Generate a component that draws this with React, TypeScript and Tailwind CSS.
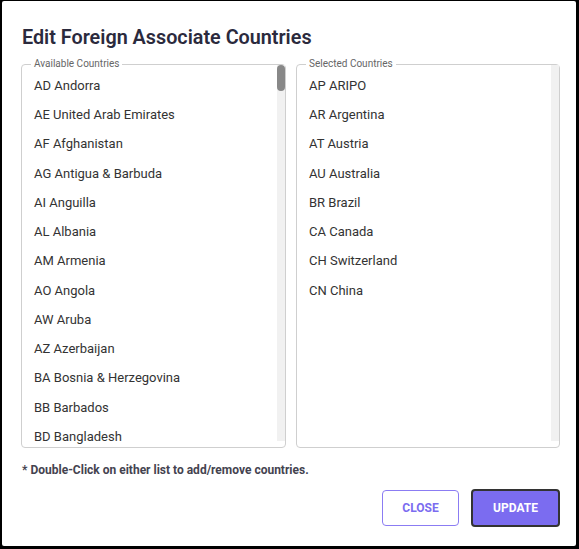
import { useState } from "react";

// ISO code + name pairs for the countries not yet picked
const AVAILABLE = `AD Andorra|AE United Arab Emirates|AF Afghanistan|AG Antigua & Barbuda|AI Anguilla|AL Albania|AM Armenia|AO Angola|AW Aruba|AZ Azerbaijan|BA Bosnia & Herzegovina|BB Barbados|BD Bangladesh|BE Belgium|BF Burkina Faso|BG Bulgaria|BH Bahrain|BI Burundi|BJ Benin|BM Bermuda|BN Brunei|BO Bolivia|BS Bahamas|BT Bhutan|BW Botswana|BY Belarus|BZ Belize|CD Congo (DRC)|CF Central African Republic|CG Congo|CI Côte d'Ivoire|CK Cook Islands|CL Chile|CM Cameroon|CO Colombia|CR Costa Rica|CU Cuba|CV Cape Verde|CY Cyprus|CZ Czech Republic|DE Germany|DJ Djibouti|DK Denmark|DM Dominica|DO Dominican Republic|DZ Algeria|EA Eurasian Patent Office|EC Ecuador|EE Estonia|EG Egypt|EM EUIPO|EP European Patent Office|ER Eritrea|ES Spain|ET Ethiopia|FI Finland|FJ Fiji|FK Falkland Islands|FM Micronesia|FO Faroe Islands|FR France|GA Gabon|GB United Kingdom|GD Grenada|GE Georgia|GH Ghana|GI Gibraltar|GL Greenland|GM Gambia|GN Guinea|GQ Equatorial Guinea|GR Greece|GT Guatemala|GW Guinea-Bissau|GY Guyana|HK Hong Kong|HN Honduras|HR Croatia|HT Haiti|HU Hungary|ID Indonesia|IE Ireland|IL Israel|IN India|IQ Iraq|IR Iran|IS Iceland|IT Italy|JM Jamaica|JO Jordan|JP Japan|KE Kenya|KG Kyrgyzstan|KH Cambodia|KI Kiribati|KM Comoros|KN St. Kitts & Nevis|KP North Korea|KR South Korea|KW Kuwait|KY Cayman Islands|KZ Kazakhstan|LA Laos|LB Lebanon|LC St. Lucia|LI Liechtenstein|LK Sri Lanka|LR Liberia|LS Lesotho|LT Lithuania|LU Luxembourg|LV Latvia|LY Libya|MA Morocco|MC Monaco|MD Moldova|ME Montenegro|MG Madagascar|MH Marshall Islands|MK North Macedonia|ML Mali|MM Myanmar|MN Mongolia|MO Macau|MR Mauritania|MS Montserrat|MT Malta|MU Mauritius|MV Maldives|MW Malawi|MX Mexico|MY Malaysia|MZ Mozambique|NA Namibia|NE Niger|NG Nigeria|NI Nicaragua|NL Netherlands|NO Norway|NP Nepal|NR Nauru|NZ New Zealand|OA OAPI|OM Oman|PA Panama|PE Peru|PG Papua New Guinea|PH Philippines|PK Pakistan|PL Poland|PT Portugal|PW Palau|PY Paraguay|QA Qatar|RO Romania|RS Serbia|RU Russia|RW Rwanda|SA Saudi Arabia|SB Solomon Islands|SC Seychelles|SD Sudan|SE Sweden|SG Singapore|SI Slovenia|SK Slovakia|SL Sierra Leone|SM San Marino|SN Senegal|SO Somalia|SR Suriname|ST São Tomé & Príncipe|SV El Salvador|SY Syria|SZ Eswatini|TC Turks & Caicos Islands|TD Chad|TG Togo|TH Thailand|TJ Tajikistan|TL Timor-Leste|TM Turkmenistan|TN Tunisia|TO Tonga|TR Turkey|TT Trinidad & Tobago|TV Tuvalu|TW Taiwan|TZ Tanzania|UA Ukraine|UG Uganda|US United States|UY Uruguay|UZ Uzbekistan|VA Vatican City|VC St. Vincent & Grenadines|VE Venezuela|VG British Virgin Islands|VN Vietnam|VU Vanuatu|WO WIPO|WS Samoa|YE Yemen|ZA South Africa|ZM Zambia|ZW Zimbabwe`.split("|");

const SELECTED = [
  "AP ARIPO",
  "AR Argentina",
  "AT Austria",
  "AU Australia",
  "BR Brazil",
  "CA Canada",
  "CH Switzerland",
  "CN China",
];

const ROW = 29.25;
const VIEW = 382;

function CountryList({
  label,
  items,
  onPick,
}: {
  label: string;
  items: string[];
  onPick: (c: string) => void;
}) {
  const [top, setTop] = useState(0);
  const content = items.length * ROW + 6;
  const scrolls = content > VIEW;
  const thumb = Math.max(26, (VIEW / content) * VIEW);
  const maxTop = Math.max(0, content - VIEW);
  const thumbTop = maxTop ? (top / maxTop) * (VIEW - thumb) : 0;

  return (
    <div className="relative flex h-[384px] rounded border border-[#cfcfcf]">
      <span className="absolute -top-[7px] left-[9px] z-10 bg-white px-[3px] text-[10px] leading-[12px] text-[#666]">
        {label}
      </span>
      <ul
        onScroll={(e) => setTop(e.currentTarget.scrollTop)}
        className="h-full flex-1 overflow-y-auto pt-[6px] [scrollbar-width:none] [&::-webkit-scrollbar]:hidden"
      >
        {items.map((c) => (
          <li
            key={c}
            onDoubleClick={() => onPick(c)}
            className="flex h-[29.25px] cursor-pointer select-none items-center pl-3 text-[13px] text-[#333]"
          >
            {c}
          </li>
        ))}
      </ul>
      {/* scrollbar track */}
      <div className="relative mb-[6px] w-2 bg-[#f1f1f1]">
        {scrolls && (
          <div
            className="absolute left-0 w-2 rounded-full bg-[#888]"
            style={{ top: thumbTop, height: thumb }}
          />
        )}
      </div>
    </div>
  );
}

export default function App() {
  const [available, setAvailable] = useState(AVAILABLE);
  const [selected, setSelected] = useState(SELECTED);

  const add = (c: string) => {
    setAvailable(available.filter((a) => a !== c));
    setSelected([...selected, c].sort());
  };
  const remove = (c: string) => {
    setSelected(selected.filter((s) => s !== c));
    setAvailable([...available, c].sort());
  };

  return (
    <div className="h-[549px] w-[579px] bg-black pb-[3px] pl-[2px] pr-[3px] pt-px font-['Roboto',sans-serif]">
      <div className="flex h-full flex-col rounded-[2px] bg-white px-[19px]">
        <h2 className="mt-[25px] pl-[1px] text-[19.8px] font-semibold leading-6 text-[#2b2a3d]">
          Edit Foreign Associate Countries
        </h2>

        <div className="mt-[14px] grid w-[539px] grid-cols-[265px_264px] gap-[10px]">
          <CountryList label="Available Countries" items={available} onPick={add} />
          <CountryList label="Selected Countries" items={selected} onPick={remove} />
        </div>

        <p className="mt-[14px] pl-[1px] text-[12px] font-bold leading-4 text-[#44434f]">
          * Double-Click on either list to add/remove countries.
        </p>

        <div className="mt-[11px] flex w-[539px] justify-end gap-3">
          <button className="mt-px h-9 w-[77px] rounded border border-[#8b7cf3] text-[12px] font-bold text-[#7b6cf0]">
            CLOSE
          </button>
          <button className="h-[38px] w-[89px] rounded border-2 border-[#333] bg-[#7b6cf0] text-[12px] font-bold text-white">
            UPDATE
          </button>
        </div>
      </div>
    </div>
  );
}
